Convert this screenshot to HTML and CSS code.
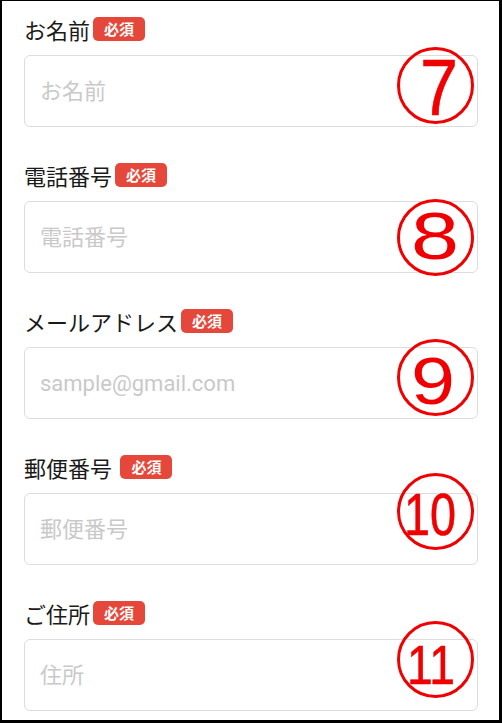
FILE: index.html
```html
<!DOCTYPE html>
<html lang="ja">
<head>
  <meta charset="UTF-8">
  <title>お問い合わせフォーム</title>
  <link rel="stylesheet" href="styles.css">
</head>
<body>

<div class="frame">

  <div class="field">
    <div class="field-label">お名前<span class="required">必須</span></div>
    <div class="input-wrap">
      <input type="text" class="text-input" placeholder="お名前">
      <svg class="mark mark-7 heavy" width="97" height="105" viewBox="-10 -14 97 105">
        <circle cx="38.5" cy="38.5" r="37" />
        <text x="23" y="68" font-size="80" textLength="38" lengthAdjust="spacingAndGlyphs">7</text>
      </svg>
    </div>
  </div>

  <div class="field">
    <div class="field-label">電話番号<span class="required">必須</span></div>
    <div class="input-wrap">
      <input type="tel" class="text-input" placeholder="電話番号">
      <svg class="mark mark-8" width="97" height="105" viewBox="-10 -14 97 105">
        <circle cx="38.5" cy="38.5" r="37" />
        <text x="14" y="60" font-size="67" textLength="48" lengthAdjust="spacingAndGlyphs">8</text>
      </svg>
    </div>
  </div>

  <div class="field">
    <div class="field-label">メールアドレス<span class="required">必須</span></div>
    <div class="input-wrap">
      <input type="email" class="text-input" placeholder="sample@gmail.com">
      <svg class="mark mark-9" width="97" height="105" viewBox="-10 -14 97 105">
        <circle cx="38.5" cy="38.5" r="37" />
        <text x="14" y="65" font-size="67" textLength="44" lengthAdjust="spacingAndGlyphs">9</text>
      </svg>
    </div>
  </div>

  <div class="field">
    <div class="field-label">郵便番号 <span class="required">必須</span></div>
    <div class="input-wrap">
      <input type="text" class="text-input" placeholder="郵便番号">
      <svg class="mark mark-10 heavy" width="97" height="105" viewBox="-10 -14 97 105">
        <circle cx="38.5" cy="38.5" r="37" />
        <text x="7" y="62" font-size="60" textLength="52" lengthAdjust="spacingAndGlyphs">10</text>
      </svg>
    </div>
  </div>

  <div class="field">
    <div class="field-label">ご住所<span class="required">必須</span></div>
    <div class="input-wrap">
      <input type="text" class="text-input" placeholder="住所">
      <svg class="mark mark-11 heavy" width="97" height="105" viewBox="-10 -14 97 105">
        <circle cx="38.5" cy="38.5" r="37" />
        <text x="10" y="63" font-size="56" textLength="48" lengthAdjust="spacingAndGlyphs">11</text>
      </svg>
    </div>
  </div>

</div>

</body>
</html>
```

FILE: styles.css
```css
* {
  box-sizing: border-box;
}

body {
  margin: 0;
  background-color: #fff;
  font-family: Roboto, "Noto Sans CJK JP", sans-serif;
  color: #1a1a1a;
}

.frame {
  width: 502px;
  height: 723px;
  border-style: solid;
  border-color: #000;
  border-width: 1px 3px 3px 2px;
  padding: 16px 21px 0 22px;
  overflow: hidden;
}

.field {
  margin-bottom: 36px;
}

.field-label {
  display: flex;
  align-items: center;
  height: 24px;
  margin-bottom: 14px;
  font-size: 22px;
  white-space: pre;
}

.required {
  display: inline-block;
  margin-left: 3px;
  height: 24px;
  line-height: 24px;
  padding: 0 11px;
  border-radius: 5px;
  background-color: #e5483b;
  color: #fff;
  font-family: "Noto Sans CJK JP", sans-serif;
  font-size: 15px;
  font-weight: bold;
}

.input-wrap {
  position: relative;
}

.text-input {
  display: block;
  width: 100%;
  height: 72px;
  padding: 0 15px;
  border: 1px solid #dcdcdc;
  border-radius: 6px;
  background: #fff;
  font-family: Roboto, "Noto Sans CJK JP", sans-serif;
  font-size: 22px;
  color: #222;
  outline: none;
}

.text-input::placeholder {
  color: #c9c9c9;
}

/* red circled numbers drawn over the inputs */
.mark {
  position: absolute;
  right: -6px;
  overflow: visible;
}

.mark circle {
  fill: none;
  stroke: #f00000;
  stroke-width: 3;
}

.mark text {
  fill: #f00000;
  font-family: "Liberation Sans", Arial, sans-serif;
}

.mark.heavy text {
  stroke: #f00000;
  stroke-width: 0.6;
}

.mark-7 { top: -22px; }
.mark-8 { top: -16px; }
.mark-9 { top: -22px; }
.mark-10 { top: -34px; }
.mark-11 { top: -32px; }
```
